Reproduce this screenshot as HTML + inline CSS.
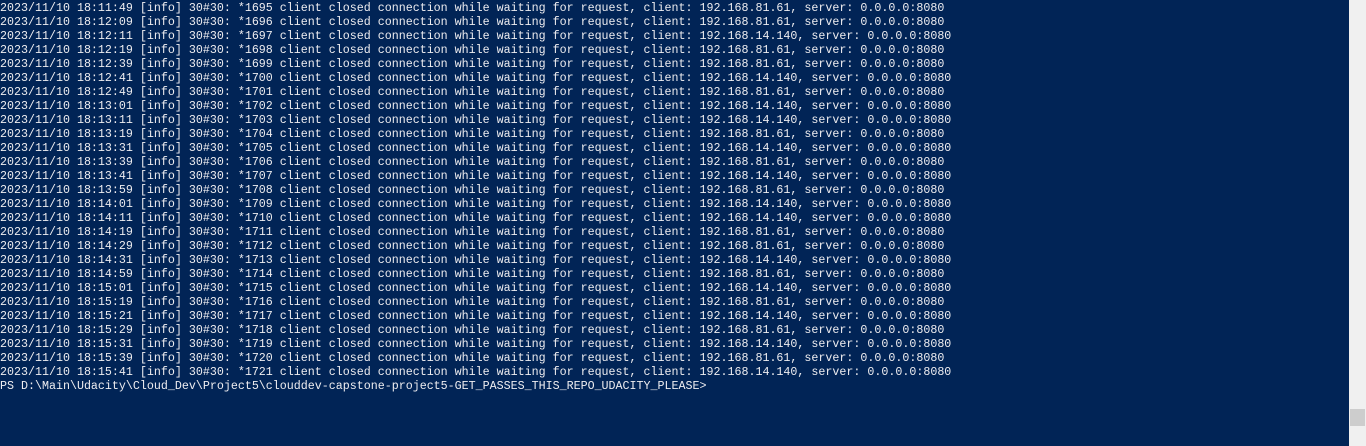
<!DOCTYPE html>
<html><head><style>
html,body{margin:0;padding:0;width:1366px;height:446px;overflow:hidden;background:#012456;}
pre{margin:0;position:absolute;left:0;top:1px;font-family:"Liberation Mono",monospace;font-size:11.67px;line-height:14px;color:#eeedf0;white-space:pre;}
.sb{position:absolute;left:1349px;top:0;width:17px;height:446px;background:#f0f0f0;}
.th{position:absolute;left:1350px;top:409px;width:15px;height:17px;background:#cdcdcd;}
</style></head><body>
<pre>2023/11/10 18:11:49 [info] 30#30: *1695 client closed connection while waiting for request, client: 192.168.81.61, server: 0.0.0.0:8080
2023/11/10 18:12:09 [info] 30#30: *1696 client closed connection while waiting for request, client: 192.168.81.61, server: 0.0.0.0:8080
2023/11/10 18:12:11 [info] 30#30: *1697 client closed connection while waiting for request, client: 192.168.14.140, server: 0.0.0.0:8080
2023/11/10 18:12:19 [info] 30#30: *1698 client closed connection while waiting for request, client: 192.168.81.61, server: 0.0.0.0:8080
2023/11/10 18:12:39 [info] 30#30: *1699 client closed connection while waiting for request, client: 192.168.81.61, server: 0.0.0.0:8080
2023/11/10 18:12:41 [info] 30#30: *1700 client closed connection while waiting for request, client: 192.168.14.140, server: 0.0.0.0:8080
2023/11/10 18:12:49 [info] 30#30: *1701 client closed connection while waiting for request, client: 192.168.81.61, server: 0.0.0.0:8080
2023/11/10 18:13:01 [info] 30#30: *1702 client closed connection while waiting for request, client: 192.168.14.140, server: 0.0.0.0:8080
2023/11/10 18:13:11 [info] 30#30: *1703 client closed connection while waiting for request, client: 192.168.14.140, server: 0.0.0.0:8080
2023/11/10 18:13:19 [info] 30#30: *1704 client closed connection while waiting for request, client: 192.168.81.61, server: 0.0.0.0:8080
2023/11/10 18:13:31 [info] 30#30: *1705 client closed connection while waiting for request, client: 192.168.14.140, server: 0.0.0.0:8080
2023/11/10 18:13:39 [info] 30#30: *1706 client closed connection while waiting for request, client: 192.168.81.61, server: 0.0.0.0:8080
2023/11/10 18:13:41 [info] 30#30: *1707 client closed connection while waiting for request, client: 192.168.14.140, server: 0.0.0.0:8080
2023/11/10 18:13:59 [info] 30#30: *1708 client closed connection while waiting for request, client: 192.168.81.61, server: 0.0.0.0:8080
2023/11/10 18:14:01 [info] 30#30: *1709 client closed connection while waiting for request, client: 192.168.14.140, server: 0.0.0.0:8080
2023/11/10 18:14:11 [info] 30#30: *1710 client closed connection while waiting for request, client: 192.168.14.140, server: 0.0.0.0:8080
2023/11/10 18:14:19 [info] 30#30: *1711 client closed connection while waiting for request, client: 192.168.81.61, server: 0.0.0.0:8080
2023/11/10 18:14:29 [info] 30#30: *1712 client closed connection while waiting for request, client: 192.168.81.61, server: 0.0.0.0:8080
2023/11/10 18:14:31 [info] 30#30: *1713 client closed connection while waiting for request, client: 192.168.14.140, server: 0.0.0.0:8080
2023/11/10 18:14:59 [info] 30#30: *1714 client closed connection while waiting for request, client: 192.168.81.61, server: 0.0.0.0:8080
2023/11/10 18:15:01 [info] 30#30: *1715 client closed connection while waiting for request, client: 192.168.14.140, server: 0.0.0.0:8080
2023/11/10 18:15:19 [info] 30#30: *1716 client closed connection while waiting for request, client: 192.168.81.61, server: 0.0.0.0:8080
2023/11/10 18:15:21 [info] 30#30: *1717 client closed connection while waiting for request, client: 192.168.14.140, server: 0.0.0.0:8080
2023/11/10 18:15:29 [info] 30#30: *1718 client closed connection while waiting for request, client: 192.168.81.61, server: 0.0.0.0:8080
2023/11/10 18:15:31 [info] 30#30: *1719 client closed connection while waiting for request, client: 192.168.14.140, server: 0.0.0.0:8080
2023/11/10 18:15:39 [info] 30#30: *1720 client closed connection while waiting for request, client: 192.168.81.61, server: 0.0.0.0:8080
2023/11/10 18:15:41 [info] 30#30: *1721 client closed connection while waiting for request, client: 192.168.14.140, server: 0.0.0.0:8080
PS D:\Main\Udacity\Cloud_Dev\Project5\clouddev-capstone-project5-GET_PASSES_THIS_REPO_UDACITY_PLEASE&gt;</pre>
<div class="sb"></div><div class="th"></div>
</body></html>
